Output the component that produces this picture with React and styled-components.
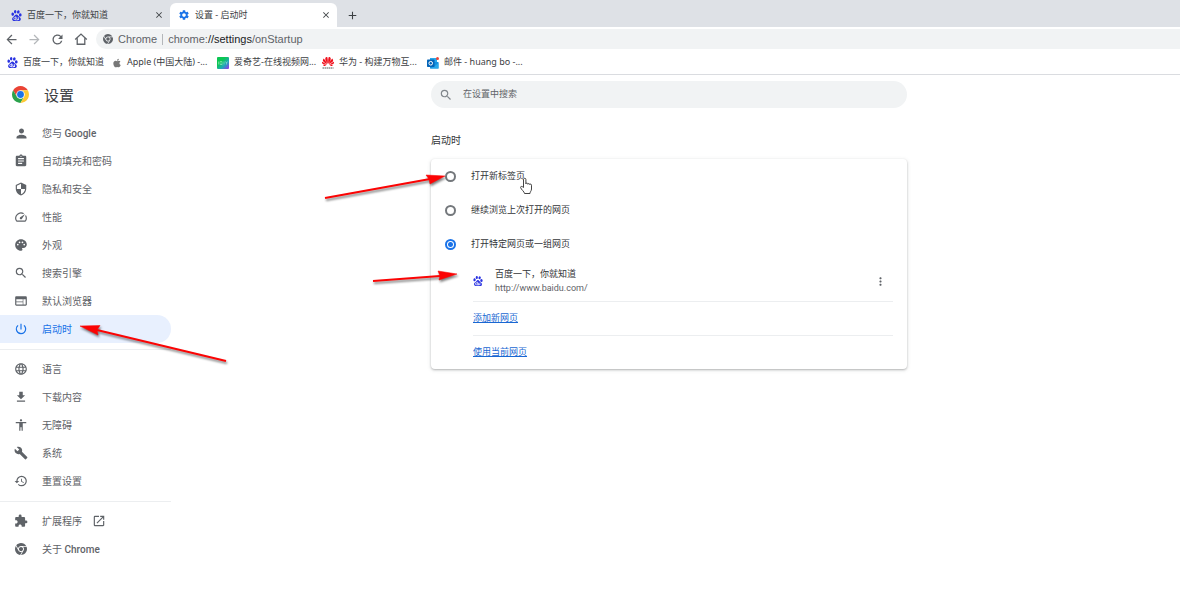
import React, { useState } from "react"
import styled, { createGlobalStyle } from "styled-components"
import {
  MdAccessibility,
  MdAdd,
  MdArrowBack,
  MdArrowForward,
  MdAssignment,
  MdBuild,
  MdClose,
  MdExtension,
  MdFileDownload,
  MdHistory,
  MdLanguage,
  MdMoreVert,
  MdOpenInNew,
  MdPalette,
  MdPerson,
  MdPowerSettingsNew,
  MdRefresh,
  MdSearch,
  MdSecurity,
  MdSettings,
  MdSpeed,
  MdWeb,
} from "react-icons/md"
import { FaApple, FaChrome } from "react-icons/fa6"
import { SiBaidu, SiHuawei } from "react-icons/si"

const BLUE = "#1a73e8"
const BAIDU = "#2932e1"
const GREY = "#5f6368"
const TEXT = "#202124"
const LINE = "#eceef0"
const FIELD = "#f1f3f4"
const UI_FONT = `Roboto, "Noto Sans CJK SC", sans-serif`
const BAR_FONT = `"Noto Sans", "Noto Sans CJK SC", sans-serif`
const URL_FONT = `"Liberation Sans", sans-serif`

const App = () => {
  const [startup, setStartup] = useState("pages")
  return (
    <React.Fragment>
      <GlobalStyle />
      <TabStrip>
        <Tab>
          <SiBaidu size={11} color={BAIDU} />
          <TabTitle>百度一下，你就知道</TabTitle>
          <IconButton aria-label="关闭">
            <MdClose size={10} />
          </IconButton>
        </Tab>
        <Tab $active>
          <MdSettings size={12} color={BLUE} />
          <TabTitle>设置 - 启动时</TabTitle>
          <IconButton aria-label="关闭">
            <MdClose size={10} />
          </IconButton>
        </Tab>
        <NewTab aria-label="新标签页">
          <MdAdd size={13} />
        </NewTab>
      </TabStrip>

      <Toolbar>
        <ToolButton aria-label="后退">
          <MdArrowBack size={15} />
        </ToolButton>
        <ToolButton aria-label="前进" disabled>
          <MdArrowForward size={15} />
        </ToolButton>
        <ToolButton aria-label="重新加载">
          <MdRefresh size={15} />
        </ToolButton>
        <ToolButton aria-label="主页">
          <HomeIcon />
        </ToolButton>
        <Omnibox>
          <FaChrome size={10} />
          <span>Chrome</span>
          <OmniDivider />
          <span>
            chrome:<Host>//settings</Host>/onStartup
          </span>
        </Omnibox>
      </Toolbar>

      <Bookmarks>
        {BOOKMARKS.map(item => (
          <Bookmark href="#" key={item.label}>
            {item.icon}
            <Label>{item.label}</Label>
          </Bookmark>
        ))}
      </Bookmarks>

      <Page>
        <Sidebar>
          <SidebarHeader>
            <ChromeLogo />
            <Title>设置</Title>
          </SidebarHeader>
          {NAV_DATA.map((group, index) => (
            <NavList key={index}>
              {group.map(({ label, brand, icon: Icon, active, external, size }) => (
                <li key={label}>
                  <NavItem href="#" $active={active}>
                    <NavIcon>
                      <Icon size={size || 14} />
                    </NavIcon>
                    <Label>
                      {label}
                      {brand && <Brand> {brand}</Brand>}
                    </Label>
                    {external && (
                      <External>
                        <MdOpenInNew size={14} />
                      </External>
                    )}
                  </NavItem>
                </li>
              ))}
            </NavList>
          ))}
        </Sidebar>

        <Main>
          <Content>
            <SearchBox>
              <MdSearch size={14} />
              <SearchInput
                type="search"
                aria-label="在设置中搜索"
                placeholder="在设置中搜索"
              />
            </SearchBox>
            <Heading>启动时</Heading>
            <Card>
              {OPTIONS.map(option => (
                <Option key={option.value}>
                  <Radio
                    type="radio"
                    name="startup"
                    checked={startup === option.value}
                    onChange={() => setStartup(option.value)}
                  />
                  <Label>{option.label}</Label>
                </Option>
              ))}
              <Sites>
                <Site>
                  <SiBaidu size={10} color={BAIDU} />
                  <SiteText>
                    <div>百度一下，你就知道</div>
                    <SiteUrl>http://www.baidu.com/</SiteUrl>
                  </SiteText>
                  <MoreButton aria-label="更多操作">
                    <MdMoreVert size={13} />
                  </MoreButton>
                </Site>
                <SiteAction>
                  <a href="#">添加新网页</a>
                </SiteAction>
                <SiteAction>
                  <a href="#">使用当前网页</a>
                </SiteAction>
              </Sites>
            </Card>
          </Content>
        </Main>
      </Page>
      <Annotations />
    </React.Fragment>
  )
}

export default App

const HomeIcon = () => (
  <svg width="14" height="14" viewBox="0 0 24 24" fill="none">
    <path
      d="M2 13 12 3.500l10 9.500M5.500 10.500V21h13V10.500"
      stroke="currentColor"
      strokeWidth="2.2"
    />
  </svg>
)

const ChromeLogo = () => (
  <svg width="17" height="17" viewBox="0 0 48 48">
    <circle cx="24" cy="24" r="13" fill="#fff" />
    <path
      d="M24 12H44.78A24 24 0 0 0 3.22 12L13.61 30A12 12 0 0 1 24 12Z"
      fill="#ea4335"
    />
    <path
      d="M13.61 30 3.22 12A24 24 0 0 0 24 48L34.39 30A12 12 0 0 1 13.61 30Z"
      fill="#2ba24c"
    />
    <path
      d="M34.39 30 24 48A24 24 0 0 0 44.78 12H24A12 12 0 0 1 34.39 30Z"
      fill="#fcc934"
    />
    <circle cx="24" cy="24" r="9.6" fill={BLUE} />
  </svg>
)

const IqiyiIcon = () => (
  <svg width="12" height="12" viewBox="0 0 24 24">
    <defs>
      <linearGradient id="iqiyi" x1="0" y1="0" x2="1" y2="1">
        <stop offset="0.35" stopColor="#0cc653" />
        <stop offset="0.65" stopColor="#1fa8b8" />
        <stop offset="1" stopColor="#a02bf0" />
      </linearGradient>
    </defs>
    <rect width="24" height="24" rx="2" fill="url(#iqiyi)" />
    <path
      d="M3 9v6M6 9h4v6H6zM10 15l1.5 1.5M14 9v6M17 9l2 3 2-3M19 12v3"
      stroke="#d9fbe6"
      strokeWidth="1"
      opacity="0.8"
      fill="none"
    />
  </svg>
)

const HuaweiIcon = () => (
  <svg width="12" height="12" viewBox="0 0 24 24">
    <SiHuawei size={24} x="0" y="-3" color="#f0101c" />
    <path d="M1 22h22" stroke="#555" strokeWidth="2" strokeDasharray="3 1" />
  </svg>
)

const OutlookIcon = () => (
  <svg width="12" height="12" viewBox="0 0 24 24">
    <path d="M6 2h14v10H6z" fill="#28a8ea" />
    <path d="M6 10h17v13H6z" fill="#1490df" />
    <path d="m6 23 8.500-4L23 12v11z" fill="#28a8ea" />
    <rect y="5" width="15" height="15" rx="1.5" fill="#0364b8" />
    <circle cx="7.5" cy="12.5" r="3.6" stroke="#fff" strokeWidth="2" fill="none" />
    <circle cx="21" cy="3" r="3" fill="#e8463a" />
  </svg>
)

const Annotations = () => (
  <Overlay width="620" height="400" viewBox="0 0 620 400" aria-hidden="true">
    <g fill="#fb0404" stroke="#fb0404">
      <path d="M325 198 430 179" strokeWidth="2" />
      <path d="M445 176 426 175 429 179 430 184Z" strokeWidth="0.5" />
      <path d="M373 281 440 276" strokeWidth="2" />
      <path d="M457 274 438 271 440 276 439 280Z" strokeWidth="0.5" />
      <path d="M226 361 97 330" strokeWidth="2" />
      <path d="M80 326 100 325.5 97 330 98 335Z" strokeWidth="0.5" />
    </g>
    <path
      d="M523.500 187.500v-8a1.200 1.200 0 0 1 2.400 0v4.500c0-1.300 2-1.300 2 .3 0-1.200 1.900-1.100 1.900.4 0-1 1.700-.9 1.700.5v3.800c0 2-1.500 2.500-1.500 4.500h-5.500c0-1.800-3.500-4-3.900-6-.2-1.400 1.500-1.400 2.900 0Z"
      fill="#fff"
      stroke="#444"
      strokeWidth="1"
    />
  </Overlay>
)

const BOOKMARKS = [
  {
    label: "百度一下，你就知道",
    icon: <SiBaidu size={11} color={BAIDU} />,
  },
  { label: "Apple (中国大陆) -...", icon: <FaApple size={10} color="#777" /> },
  { label: "爱奇艺-在线视频网...", icon: <IqiyiIcon /> },
  { label: "华为 - 构建万物互...", icon: <HuaweiIcon /> },
  { label: "邮件 - huang bo -...", icon: <OutlookIcon /> },
]

const NAV_DATA = [
  [
    { label: "您与", brand: "Google", icon: MdPerson, size: 15 },
    { label: "自动填充和密码", icon: MdAssignment },
    { label: "隐私和安全", icon: MdSecurity },
    { label: "性能", icon: MdSpeed },
    { label: "外观", icon: MdPalette },
    { label: "搜索引擎", icon: MdSearch },
    { label: "默认浏览器", icon: MdWeb },
    { label: "启动时", icon: MdPowerSettingsNew, active: true },
  ],
  [
    { label: "语言", icon: MdLanguage },
    { label: "下载内容", icon: MdFileDownload },
    { label: "无障碍", icon: MdAccessibility },
    { label: "系统", icon: MdBuild },
    { label: "重置设置", icon: MdHistory },
  ],
  [
    { label: "扩展程序", icon: MdExtension, external: true },
    { label: "关于", brand: "Chrome", icon: FaChrome, size: 12 },
  ],
]

const OPTIONS = [
  { value: "newtab", label: "打开新标签页" },
  { value: "continue", label: "继续浏览上次打开的网页" },
  { value: "pages", label: "打开特定网页或一组网页" },
]

const GlobalStyle = createGlobalStyle`
  * {
    box-sizing: border-box;
  }

  body {
    margin: 0;
    background: #ffffff;
    color: #333538;
    font-family: ${UI_FONT};
    font-size: 9px;
  }

  svg {
    flex-shrink: 0;
  }

  button,
  input {
    font: inherit;
    color: inherit;
  }
`

const Label = styled.span`
  padding-bottom: 2px;
  white-space: pre;
`

const TabStrip = styled.div`
  display: flex;
  align-items: flex-end;
  height: 27px;
  padding-left: 3px;
  background: #dee1e6;
`

const Tab = styled.div`
  display: flex;
  align-items: center;
  gap: 5px;
  width: 167px;
  height: 24px;
  padding: 0 5px 0 8px;
  border-radius: 6px 6px 0 0;
  background: ${props => (props.$active ? `#ffffff` : `transparent`)};
  color: #3c4043;
  font-family: ${BAR_FONT};
`

const TabTitle = styled(Label)`
  flex: 1;
`

const IconButton = styled.button`
  display: flex;
  align-items: center;
  justify-content: center;
  padding: 1px;
  border: none;
  background: transparent;
  color: #3c4043;
`

const NewTab = styled(IconButton)`
  height: 24px;
  margin-left: 8px;
`

const Toolbar = styled.div`
  display: flex;
  align-items: center;
  height: 24px;
`

const ToolButton = styled(IconButton)`
  width: 23px;
  height: 22px;
  color: ${GREY};

  &:disabled {
    color: #b4b7ba;
  }
`

const Omnibox = styled.div`
  display: flex;
  flex: 1;
  align-items: center;
  gap: 5px;
  height: 20px;
  margin-left: 4px;
  padding-left: 7px;
  border-radius: 10px 0 0 10px;
  background: ${FIELD};
  color: ${GREY};
  font-family: ${URL_FONT};
  font-size: 11px;
`

const OmniDivider = styled.i`
  width: 1px;
  height: 11px;
  background: #b4b7ba;
`

const Host = styled.span`
  color: ${TEXT};
`

const Bookmarks = styled.nav`
  display: flex;
  align-items: center;
  height: 24px;
  padding-left: 7px;
  border-bottom: 1px solid #dadce0;
`

const Bookmark = styled.a`
  display: flex;
  flex: 0 0 105px;
  align-items: center;
  gap: 5px;
  color: #3c4043;
  font-family: ${BAR_FONT};
  text-decoration: none;
`

const Page = styled.div`
  display: grid;
  grid-template-columns: 171px 1fr;
`

const Sidebar = styled.aside`
  padding-bottom: 6px;
`

const SidebarHeader = styled.header`
  display: flex;
  align-items: center;
  gap: 15px;
  height: 40px;
  margin-bottom: 4px;
  padding: 0 0 2px 12px;
`

const Title = styled.h1`
  margin: 0;
  color: #3c4043;
  font-size: 15px;
  font-weight: 400;
`

const NavList = styled.ul`
  margin: 0;
  padding: 0;
  list-style: none;

  & + & {
    margin-top: 6px;
    padding-top: 5px;
    border-top: 1px solid ${LINE};
  }
`

const NavItem = styled.a`
  display: flex;
  align-items: center;
  gap: 14px;
  height: 28px;
  padding-left: 14px;
  border-radius: 0 14px 14px 0;
  background: ${props => (props.$active ? `#e8f0fe` : `transparent`)};
  color: ${props => (props.$active ? BLUE : GREY)};
  font-size: 10px;
  text-decoration: none;
`

const NavIcon = styled.span`
  display: flex;
  justify-content: center;
  width: 14px;
`

const Brand = styled.span`
  font-weight: 500;
`

const External = styled.span`
  display: flex;
  margin-left: -4px;
`

const Main = styled.main`
  padding: 6px 13px 24px 0;
`

const Content = styled.div`
  max-width: 476px;
  margin: 0 auto;
`

const SearchBox = styled.label`
  display: flex;
  align-items: center;
  gap: 10px;
  height: 27px;
  padding: 0 8px;
  border-radius: 14px;
  background: ${FIELD};
  color: #80868b;
`

const SearchInput = styled.input`
  flex: 1;
  padding: 0 0 2px;
  border: none;
  outline: none;
  background: transparent;

  &::placeholder {
    color: ${GREY};
  }
`

const Heading = styled.h2`
  margin: 24px 0 9px;
  font-size: 10px;
  font-weight: 400;
  line-height: 18px;
`

const Card = styled.section`
  border-radius: 4px;
  background: #ffffff;
  box-shadow: 0 1px 2px rgba(60, 64, 67, 0.3), 0 1px 4px rgba(60, 64, 67, 0.15);
`

const Option = styled.label`
  display: flex;
  align-items: center;
  gap: 15px;
  height: 34px;
  padding-left: 14px;
`

const Radio = styled.input`
  appearance: none;
  width: 11px;
  height: 11px;
  margin: 0;
  border: 2px solid #74787c;
  border-radius: 50%;

  &:checked {
    border-color: ${BLUE};
    background: radial-gradient(${BLUE} 2px, #ffffff 3px);
  }
`

const Sites = styled.div`
  padding: 0 14px 0 42px;
`

const Site = styled.div`
  display: flex;
  align-items: center;
  gap: 12px;
  height: 40px;
`

const SiteText = styled.div`
  flex: 1;
  line-height: 14px;
`

const SiteUrl = styled.div`
  color: ${GREY};
`

const MoreButton = styled(IconButton)`
  margin-right: 5px;
  color: ${GREY};
`

const SiteAction = styled.div`
  display: flex;
  align-items: center;
  height: 34px;
  padding-bottom: 2px;
  border-top: 1px solid ${LINE};

  a {
    color: #1967d2;
  }
`

const Overlay = styled.svg`
  position: absolute;
  top: 0;
  left: 0;
  pointer-events: none;

  g {
    filter: drop-shadow(1px 2px 1px rgba(0, 0, 0, 0.5));
  }
`
